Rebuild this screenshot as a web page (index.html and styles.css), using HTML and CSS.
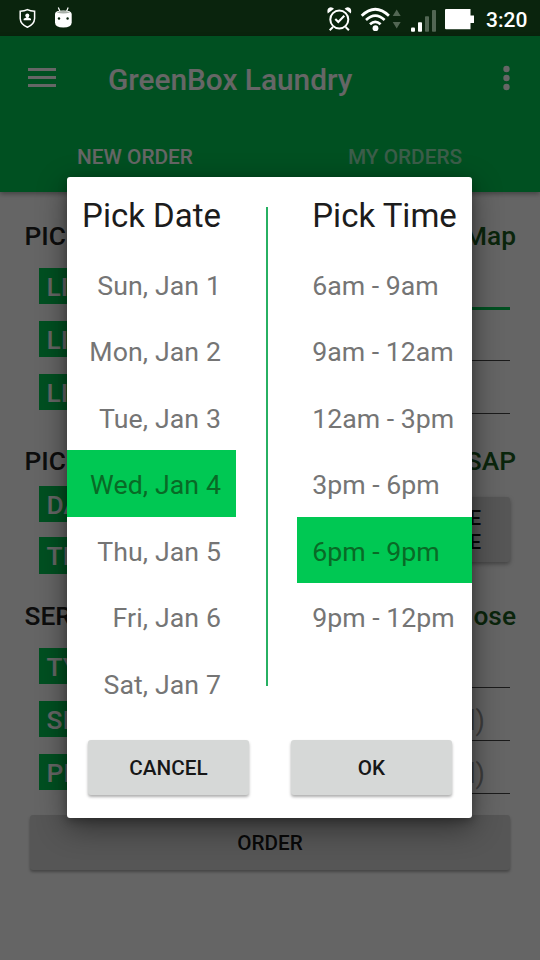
FILE: index.html
```html
<!DOCTYPE html>
<html lang="en">
<head>
<meta charset="utf-8">
<title>GreenBox Laundry</title>
<link rel="stylesheet" href="styles.css">
</head>
<body>
<div class="screen">
  <div class="status">
    <svg class="status-left" width="80" height="36" viewBox="0 0 80 36">
      <path d="M20.2 11.2Q24.500 11 27.400 9.600Q30.300 11 34.600 11.200V18.500Q34.300 24.500 27.400 27.200Q20.500 24.500 20.200 18.500Z" fill="none" stroke="#fff" stroke-width="1.500"/>
      <circle cx="27.300" cy="15.600" r="2" fill="#fff"/>
      <path d="M26.300 16h2v1.500l2.700 1.300v1.400h-7.400v-1.400l2.700-1.300z" fill="#fff"/>
      <path d="M58.300 7.500l1.700 4M68.200 7.500l-1.700 4" stroke="#fff" stroke-width="1.200"/>
      <path d="M55 14Q55 10.600 63.300 10.600T71.700 14V22.500Q71.500 27.500 63.300 27.500T55 22.500Z" fill="#fff"/>
      <path d="M56.500 12.400Q63.300 14.500 70.200 12.400Q63.300 9.800 56.500 12.400Z" fill="#a8b0a8"/>
      <circle cx="59" cy="18.500" r="1.200" fill="#0a240d"/><circle cx="67.600" cy="18.500" r="1.200" fill="#0a240d"/>
    </svg>
    <svg class="status-right" width="160" height="36" viewBox="320 0 160 36">
      <g fill="none" stroke="#fff" stroke-width="2">
        <circle cx="339.300" cy="19.500" r="9"/>
        <path d="M335.300 19l3 3 6-6.300" stroke-width="2.100"/>
        <path d="M333 27l-3.300 3.200M345.600 27l3.300 3.200"/>
      </g>
      <path d="M327.700 13.500Q326.500 8.500 329.700 7.400Q332.500 6.800 334 8.800ZM350.900 13.500Q352.100 8.500 348.900 7.400Q346.100 6.800 344.600 8.800Z" fill="#fff"/>
      <g fill="none" stroke="#fff" stroke-width="2.700">
        <path d="M361.700 15.700Q375.300 2.800 388.900 15.700"/>
        <path d="M366 20Q375.300 11.400 384.600 20"/>
        <path d="M370 24.300Q375.300 19.300 380.600 24.300"/>
      </g>
      <circle cx="375.500" cy="28.200" r="2.900" fill="#fff"/>
      <path d="M396.700 9.500l4 6.500h-8zM396.700 28.500l4-6.500h-8z" fill="#526653"/>
      <rect x="411" y="27.500" width="4" height="4.300" rx="1" fill="#fff"/>
      <rect x="418" y="22.300" width="4" height="9.500" rx=".8" fill="#fff"/>
      <rect x="425" y="16.300" width="4" height="15.500" rx=".8" fill="#526653"/>
      <rect x="432" y="10" width="4" height="21.800" rx=".8" fill="#526653"/>
      <path d="M446 9h24.500v6.500h3.500v7.500h-3.500v6.200h-24.500q-1 0-1-1v-18.200q0-1 1-1z" fill="#fff"/>
    </svg>
    <span class="clock">3:20</span>
  </div>

  <div class="app">
    <header class="appbar">
      <div class="toolbar">
        <svg class="menu" width="28" height="20" viewBox="0 0 28 20"><path d="M0 1.500h28M0 9.500h28M0 17.500h28" stroke="#fff" stroke-width="3"/></svg>
        <h1>GreenBox Laundry</h1>
        <svg width="7" height="26" viewBox="0 0 7 26" fill="#fff"><circle cx="3.500" cy="4" r="3.200"/><circle cx="3.500" cy="13" r="3.200"/><circle cx="3.500" cy="22" r="3.200"/></svg>
      </div>
      <nav class="tabs"><span>NEW ORDER</span><span class="off">MY ORDERS</span></nav>
    </header>
    <main class="form">
      <section class="pickup">
        <div class="head"><span>PIC</span><a>Map</a></div>
        <div class="row"><b>LI</b><i class="line focus"></i></div>
        <div class="row"><b>LI</b><i class="line"></i></div>
        <div class="row"><b>LI</b><i class="line"></i></div>
      </section>
      <section class="when">
        <div class="head"><span>PIC</span><a>SAP</a></div>
        <div class="pair">
          <div><div class="row"><b>DA</b></div><div class="row"><b>TI</b></div></div>
          <div class="choose"><span>E<br>E</span></div>
        </div>
      </section>
      <section class="service">
        <div class="head"><span>SER</span><a>ose</a></div>
        <div class="row"><b>TY</b><i class="line"></i></div>
        <div class="row"><b>SI</b><i class="line">l)</i></div>
        <div class="row"><b>PI</b><i class="line">l)</i></div>
      </section>
      <div class="btn order">ORDER</div>
    </main>
    <div class="scrim"></div>
  </div>

  <div class="dialog">
    <div class="picker">
      <div class="dates">
        <h2>Pick Date</h2>
        <ul><li>Sun, Jan 1</li><li>Mon, Jan 2</li><li>Tue, Jan 3</li><li class="sel">Wed, Jan 4</li><li>Thu, Jan 5</li><li>Fri, Jan 6</li><li>Sat, Jan 7</li></ul>
      </div>
      <div class="divider"></div>
      <div class="times">
        <h2>Pick Time</h2>
        <ul><li>6am - 9am</li><li>9am - 12am</li><li>12am - 3pm</li><li>3pm - 6pm</li><li class="sel">6pm - 9pm</li><li>9pm - 12pm</li></ul>
      </div>
    </div>
    <div class="actions"><div class="btn">CANCEL</div><div class="btn">OK</div></div>
  </div>
</div>
</body>
</html>
```
FILE: styles.css
```css
* { box-sizing: border-box; }
body { margin: 0; font-family: Roboto, "Liberation Sans", sans-serif; }
h1, h2, ul { margin: 0; padding: 0; font-weight: 400; }
li { list-style: none; }
.screen { position: relative; width: 540px; height: 960px; overflow: hidden; display: flex; flex-direction: column; }

.status { height: 36px; flex: none; display: flex; align-items: center; background: #0a240d; color: #fff; }
.status-right { margin-left: auto; }
.clock { width: 60px; padding: 3px 0 0 6px; font-size: 21px; line-height: 36px; font-weight: 500; white-space: nowrap; }

.app { position: relative; flex: 1; background: #fcfcfc; }
.scrim { position: absolute; inset: 0; background: rgba(0, 0, 0, .6); }
.appbar { position: relative; height: 156px; background: #00c853; color: #fff; box-shadow: 0 2px 5px rgba(0, 0, 0, .35); }
.toolbar { height: 84px; display: flex; align-items: center; padding: 0 30px 0 28px; }
.toolbar h1 { flex: 1; margin-left: 52px; padding-top: 3px; font-size: 29.800px; font-weight: 500; }
.tabs { display: grid; grid-template-columns: 1fr 1fr; height: 72px; text-align: center; font-size: 20.800px; font-weight: 500; line-height: 74px; }
.off { color: rgba(255, 255, 255, .6); }

.form { padding: 26px 30px 0 24.500px; font-size: 26.300px; font-weight: 500; }
.head { display: flex; justify-content: space-between; height: 36px; line-height: 36px; margin-right: -6px; color: #212121; }
.head a { color: #1b5e20; }
.row { display: flex; height: 53px; padding: 0 0 0 14.500px; align-items: flex-start; }
.row b { width: 70px; height: 36.700px; padding-left: 7.500px; margin-top: 13.500px; line-height: 38px; background: #00c853; color: #fff; font-weight: 500; }
.line { flex: 1; height: 54px; border-bottom: 1.500px solid #444; padding-right: 25px; text-align: right; line-height: 69px; font-size: 27px; font-style: normal; font-weight: 400; color: #999; }
.focus { height: 56px; border-bottom: 3px solid #00c853; }
.pickup { height: 225px; }
.when { height: 155px; }
.when .head { height: 30px; }
.when .row { height: 51.500px; }
.when .row b { margin-top: 11.500px; }
.pair { display: flex; justify-content: space-between; padding-top: 1px; }
.choose { width: 120px; height: 65px; margin-top: 23px; padding: 9px 29px 0 0; border-radius: 3px; background: #d6d7d7; box-shadow: 0 2px 4px rgba(0, 0, 0, .35); text-align: right; font-size: 20.500px; line-height: 24px; color: #111; }
.service { height: 193px; }

.btn { display: flex; align-items: center; justify-content: center; height: 55px; border-radius: 3px; background: #d6d8d7; box-shadow: 0 2px 3px rgba(0, 0, 0, .32); color: #171717; font-size: 20.700px; font-weight: 500; }
.order { margin: 24px 0 0 5.500px; }

.dialog { position: absolute; left: 67px; top: 177.400px; width: 405.300px; height: 640.500px; border-radius: 3px; background: #fff; box-shadow: 0 9px 30px rgba(0, 0, 0, .46), 0 3px 8px rgba(0, 0, 0, .25); }
.picker { display: flex; height: 562.700px; }
.dates { width: 169px; text-align: right; }
.times { width: 175px; margin-left: auto; }
.divider { width: 1.500px; height: 479px; margin: 29.500px 0 0 30px; background: #27b062; }
.dialog h2 { height: 73.400px; padding: 0 15px; line-height: 77px; font-size: 33px; color: #1c1c1c; white-space: nowrap; }
.dialog li { height: 66.500px; padding: 0 15px; line-height: 71px; font-size: 26.700px; color: #757575; white-space: nowrap; }
.dates li { letter-spacing: .1px; }
.dialog .sel { background: #00c853; color: #096a26; }
.actions { display: grid; grid-template-columns: 161px 161px; gap: 42px; padding-left: 21px; }
.actions .btn { padding-top: 1px; }
```
